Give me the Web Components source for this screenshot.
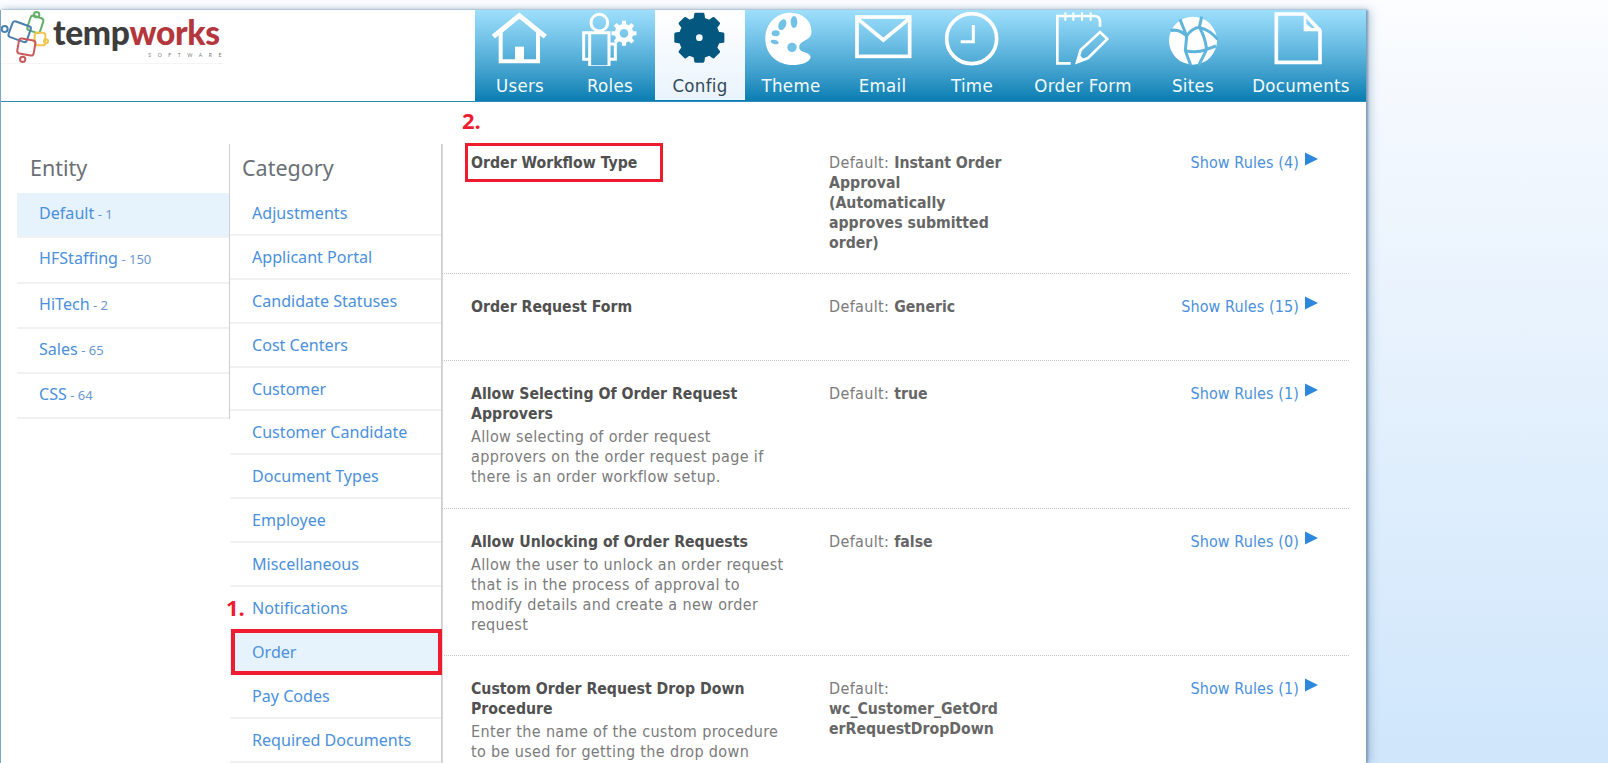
<!DOCTYPE html>
<html><head><meta charset="utf-8"><title>Config</title>
<style>
html,body{margin:0;height:763px;overflow:hidden;background:linear-gradient(#fbfdff 0,#f3f8fe 120px,#cfe6fb 763px);font-family:"Noto Sans","DejaVu Sans",sans-serif}
</style></head><body>
<app-shell>
  <brand-logo slot="logo"></brand-logo>
  <top-nav slot="nav"></top-nav>
  <side-list slot="entity" heading="Entity" hh="49" hp="13" row="45.3" lh="41" items="Default|1|on;HFStaffing|150;HiTech|2;Sales|65;CSS|64"></side-list>
  <side-list slot="category" heading="Category" hh="48" hp="12" row="43.9" lh="43" items="Adjustments;Applicant Portal;Candidate Statuses;Cost Centers;Customer;Customer Candidate;Document Types;Employee;Miscellaneous;Notifications;Order||on|1.;Pay Codes;Required Documents"></side-list>
  <config-row slot="rows" first h="130" mark="2." rules="4"><span slot="title">Order Workflow Type</span><span slot="def">Default: <b>Instant Order<br>Approval<br>(Automatically<br>approves submitted<br>order)</b></span></config-row>
  <config-row slot="rows" h="87" rules="15"><span slot="title">Order Request Form</span><span slot="def">Default: <b>Generic</b></span></config-row>
  <config-row slot="rows" h="148" rules="1"><span slot="title">Allow Selecting Of Order Request<br>Approvers</span><span slot="def">Default: <b>true</b></span>Allow selecting of order request<br>approvers on the order request page if<br>there is an order workflow setup.</config-row>
  <config-row slot="rows" h="147" rules="0"><span slot="title">Allow Unlocking of Order Requests</span><span slot="def">Default: <b>false</b></span>Allow the user to unlock an order request<br>that is in the process of approval to<br>modify details and create a new order<br>request</config-row>
  <config-row slot="rows" h="147" rules="1"><span slot="title">Custom Order Request Drop Down<br>Procedure</span><span slot="def">Default:<br><b>wc_Customer_GetOrd<br>erRequestDropDown</b></span>Enter the name of the custom procedure<br>to be used for getting the drop down</config-row>
</app-shell>
<script>
const TAH='"DejaVu Sans",sans-serif';
function gear(cx,cy,ro,ri,n){let d='';const s=Math.PI*2/n;for(let i=0;i<n;i++){const a=i*s-Math.PI/2;
[[a-s*.2,ro],[a+s*.2,ro],[a+s*.3,ri],[a+s*.7,ri]].forEach(([t,r],j)=>{d+=(i||j?'L':'M')+(cx+r*Math.cos(t)).toFixed(1)+' '+(cy+r*Math.sin(t)).toFixed(1)})}return d+'Z'}
const ICONS={
Users:[150,`<g fill="none" stroke="#fff"><path stroke-width="15" d="M70 110 148 47 226 110"/><path stroke-width="12" d="M92 92V184H204V92"/></g><path fill="#fff" d="M135 140H162V185H135Z"/>`],
Roles:[420,`<g fill="none" stroke="#fff" stroke-width="9"><circle cx="388" cy="68" r="25"/><path d="M359 98H417V200H359ZM359 98H341V178H359M417 132H436V178H417"/></g><path fill="#fff" fill-rule="evenodd" d="${gear(462,100,38,28,8)}M462 87a13 13 0 1 0 .01 0Z"/>`],
Config:[690,`<path fill="#04587f" stroke="#04587f" stroke-width="8" stroke-linejoin="round" d="${gear(688,113,72,58,8)}"/><circle cx="688" cy="113" r="10" fill="#f4f9fe"/>`],
Theme:[963,`<path fill="#fff" d="M960 38C1000 38 1028 65 1024 100 1020 125 985 120 988 145 990 160 1022 155 1022 172 1018 190 985 197 960 195 915 190 886 160 886 115 886 70 920 38 960 38Z"/><g fill="#72c2e6"><ellipse cx="937" cy="74" rx="11" ry="17" transform="rotate(25 937 74)"/><ellipse cx="972" cy="66" rx="10" ry="18"/><ellipse cx="917" cy="100" rx="12" ry="9"/><ellipse cx="914" cy="126" rx="12" ry="6" transform="rotate(15 914 126)"/><circle cx="966" cy="142" r="14"/></g>`],
Email:[1239,`<g fill="none" stroke="#fff" stroke-width="11"><rect x="1161" y="51" width="158" height="118"/><path d="M1165 58 1240 120 1315 58"/></g>`],
Time:[156,`<g fill="none" stroke="#fff"><circle cx="155" cy="116" r="75" stroke-width="11"/><path stroke-width="9" d="M160 75V125H122"/></g>`],
"Order Form":[489,`<g fill="none" stroke="#fff"><path stroke-width="8" d="M540 80V65Q540 48 522 48H412V190H452"/><path stroke-width="6" d="M436 37V62M460 37V62M486 37V62M512 37V62"/><path stroke-width="8" d="M471 187 482 150 540 96 562 117 504 174Z"/></g><path fill="#fff" d="M468 190 476 162 494 180Z"/>`],
Sites:[819,`<circle cx="819" cy="122" r="72" fill="#fff"/><g fill="none" stroke="#5fb4dc" stroke-width="9"><path d="M752 92Q775 85 800 108L796 152 812 196M800 108Q815 85 838 82L845 50M838 82Q870 90 893 118M838 82Q855 110 860 148Q830 160 796 152M860 148 836 196M860 148 888 138M780 58 800 108"/></g>`],
Documents:[1140,`<g fill="none" stroke="#fff" stroke-width="11"><path d="M1066 42H1150L1197 92V187H1066Z"/></g><path fill="#fff" d="M1148 42H1156V72L1172 84H1200V94H1148Z"/>`]};
function shadow(el,html){el.attachShadow({mode:'open'}).innerHTML=html;}

class AppShell extends HTMLElement{constructor(){super();shadow(this,`<style>
:host{display:block;width:1366px;height:753px;margin-top:10px;background:#fff;box-shadow:2px 0 2px #7f9db6,5px 0 8px rgba(90,130,165,.35),0 -2px 5px rgba(120,150,180,.18);border-left:1px solid #7fa6c6;box-sizing:border-box;overflow:hidden}
header{display:flex;height:91px;border-bottom:1px solid #2d8bb9;justify-content:space-between}
.body{display:grid;grid-template-columns:213px 212px 1fr;padding:42px 17px 0 16px;height:620px;align-items:stretch}
.ent{align-self:start}
</style><header><slot name="logo"></slot><slot name="nav"></slot></header>
<div class="body"><div class="ent"><slot name="entity"></slot></div><div><slot name="category"></slot></div><div><slot name="rows"></slot></div></div>`)}}

class BrandLogo extends HTMLElement{constructor(){super();shadow(this,`<style>
:host{display:block;width:222px;height:53px;position:relative;border-bottom:1px solid #f5f5f5;font-family:"Lato","Open Sans",sans-serif}
.w{display:flex;align-items:flex-start}
svg{flex:none;margin-left:-1px}
.t{font-size:33.5px;font-weight:900;line-height:44px;letter-spacing:-.3px;color:#3d3d3d;margin-left:3px}
.t i{font-style:normal;color:#b4373e}
.s{position:absolute;right:1px;top:42px;font-size:5px;line-height:6px;letter-spacing:6.6px;color:#777;margin-right:-6px}
</style><div class="w"><svg width="50" height="54" viewBox="0 28 150 162" fill="none" stroke-width="6">
<g stroke="#62b06a"><rect x="86" y="48" width="40" height="46" rx="8" transform="rotate(18 106 71)"/><circle cx="110" cy="42" r="8"/></g>
<g stroke="#4a7fae"><rect x="30" y="68" width="58" height="50" rx="8" transform="rotate(20 59 93)"/><circle cx="14" cy="85" r="9"/></g>
<g stroke="#efc651"><rect x="104" y="96" width="32" height="38" rx="8"/><circle cx="138" cy="122" r="6"/></g>
<g stroke="#c85a5c"><rect x="54" y="116" width="50" height="46" rx="8" transform="rotate(10 79 139)"/><circle cx="68" cy="176" r="8"/></g></svg>
<span class="t">temp<i>works</i></span></div><span class="s">SOFTWARE</span>`)}}

class TopNav extends HTMLElement{constructor(){super();shadow(this,`<style>
:host{display:flex;width:891px;height:91px;background:linear-gradient(#9edffc 0,#6fc0e6 35%,#3d9ecb 70%,#0a7db1 100%)}
</style><slot></slot>`);
[['Users',90],['Roles',90],['Config',90,1],['Theme',92],['Email',91],['Time',88],['Order Form',134],['Sites',86],['Documents',130]].forEach(([n,w,a])=>{
const t=document.createElement('nav-tab');t.setAttribute('icon',n);t.style.width=w+'px';if(a)t.setAttribute('active','');t.textContent=n;this.appendChild(t)})}}

class NavTab extends HTMLElement{connectedCallback(){if(this.shadowRoot)return;const[c,g]=ICONS[this.getAttribute('icon')];shadow(this,`<style>
:host{display:flex;flex-direction:column;align-items:center;height:91px;box-sizing:border-box;color:#f4fbff;font:18.5px/20px ${TAH};font-stretch:condensed;letter-spacing:.3px;flex:none}
:host([active]){background:linear-gradient(#fff,#e9f3fc);color:#33485a;height:90px}
svg{display:block;flex:none}
.l{margin-top:10px;white-space:nowrap}
</style><svg width="60" height="56" viewBox="${c-90} 30 180 168">${g}</svg><span class="l"><slot></slot></span>`)}}

class SideList extends HTMLElement{connectedCallback(){if(this.shadowRoot)return;
const rows=this.getAttribute('items').split(';').map(s=>{const[n,c,on,m]=s.split('|');return `<list-item ${on?'on':''} ${m?`mark="${m}"`:''}>${n}${c?`<small slot="count"> - ${c}</small>`:''}</list-item>`}).join('');
shadow(this,`<style>
:host{display:block;border-right:1px solid #cfcfcf;box-sizing:border-box;height:100%;--row:${this.getAttribute('row')}px;--lh:${this.getAttribute('lh')}px}
h2{margin:0;font:400 21.5px/47px "Noto Sans",sans-serif;color:#6b6f76;padding-left:${this.getAttribute('hp')}px;height:${this.getAttribute('hh')}px}
</style><h2>${this.getAttribute('heading')}</h2><slot></slot>`);this.innerHTML=rows}}

class ListItem extends HTMLElement{connectedCallback(){if(this.shadowRoot)return;const m=this.getAttribute('mark');shadow(this,`<style>
:host{display:block;height:var(--row,44px);box-sizing:border-box;padding-left:22px;border-bottom:2px solid #f1f1f1;position:relative;font-family:"Noto Sans",sans-serif;font-size:16.1px;line-height:var(--lh,43px);color:#4a90dc;white-space:nowrap}
:host([on]){background:#e6f3fc}
::slotted(small){font-size:13px;color:#6a97d0}
.box{position:absolute;left:1px;right:-1px;top:-2px;bottom:-2px;border:4px solid #ee1c2e;pointer-events:none}
.n{position:absolute;left:-4px;top:-38px;font:700 22px/28px "Open Sans",sans-serif;color:#ee1c2e}
</style><slot></slot><slot name="count"></slot>${m?`<span class="n">${m}</span><span class="box"></span>`:''}`)}}

class ConfigRow extends HTMLElement{connectedCallback(){if(this.shadowRoot)return;const m=this.getAttribute('mark');const first=this.hasAttribute('first');shadow(this,`<style>
:host{display:grid;grid-template-columns:358px 172px 1fr;height:${this.getAttribute('h')}px;box-sizing:border-box;padding:${first?9:23}px 31px 0 28px;border-bottom:1px dotted #c4c4c4;font:16px/20px ${TAH};font-stretch:condensed;letter-spacing:.35px;color:#7b7b7b;position:relative;border-left:1px solid #d8d8d8}
.t{font-weight:700;font-size:15.7px;letter-spacing:0;color:#505050}
.d{margin-top:3px}
.def{white-space:nowrap}
.def ::slotted(*){color:#7b7b7b}
a{color:#4a90dc;display:flex;justify-content:flex-end;gap:6px;text-decoration:none;white-space:nowrap;letter-spacing:.1px}
svg{margin-top:-1px}
.box{position:absolute;left:22px;top:-1px;width:198px;height:39px;box-sizing:border-box;border:3px solid #ee1c2e}
.n{position:absolute;left:19px;top:-38px;font:700 22px/28px "Open Sans",sans-serif;letter-spacing:0;color:#ee1c2e}
</style><div><div class="t"><slot name="title"></slot></div><div class="d"><slot></slot></div></div><div class="def"><slot name="def"></slot></div>
<a>Show Rules (${this.getAttribute('rules')})<svg width="13" height="14" viewBox="0 0 14 14"><path fill="#2d88dc" d="M0 0 14 7 0 14Z"/></svg></a>${m?`<span class="n">${m}</span><span class="box"></span>`:''}`);
this.querySelectorAll('b').forEach(b=>{b.style.fontSize='15.7px';b.style.letterSpacing='0';b.style.color='#666'})}}

[['app-shell',AppShell],['brand-logo',BrandLogo],['nav-tab',NavTab],['top-nav',TopNav],['list-item',ListItem],['side-list',SideList],['config-row',ConfigRow]].forEach(([n,c])=>customElements.define(n,c));
</script></body></html>
